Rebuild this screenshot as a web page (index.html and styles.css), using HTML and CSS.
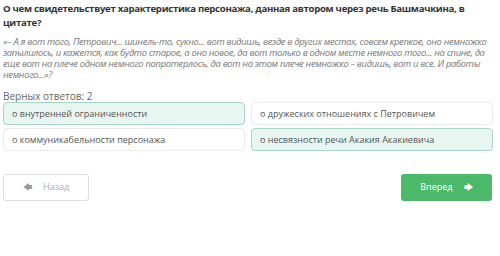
FILE: index.html
```html
<!DOCTYPE html>
<html>
<head>
<meta charset="UTF-8">
<title>Вопрос</title>
<link rel="stylesheet" href="styles.css">
</head>
<body>

<div class="question">
  <h1>О чем свидетельствует характеристика персонажа, данная автором через речь Башмачкина, в цитате?</h1>
  <p class="quote">«– А я вот того, Петрович... шинель-то, сукно... вот видишь, везде в других местах, совсем крепкое, оно немножко запылилось, и кажется, как будто старое, а оно новое, да вот только в одном месте немного того... на спине, да еще вот на плече одном немного попротерлось, да вот на этом плече немножко – видишь, вот и все. И работы немного...»?</p>
</div>

<div class="count">Верных ответов: 2</div>

<div class="answers">
  <div class="answer selected">о внутренней ограниченности</div>
  <div class="answer">о дружеских отношениях с Петровичем</div>
  <div class="answer">о коммуникабельности персонажа</div>
  <div class="answer selected">о несвязности речи Акакия Акакиевича</div>
</div>

<div class="nav">
  <button class="back"><span class="arrow">&#129092;</span> Назад</button>
  <button class="next">Вперед <span class="arrow">&#129094;</span></button>
</div>

</body>
</html>
```
FILE: styles.css
```css
body{
  margin:0; padding:0 2px 0 3px;
  font-family:"Open Sans",Arial,sans-serif; color:#555;
  background:#fff;
}
.question{padding-top:2px}
h1{
  margin:0; font-size:9.6px; line-height:14px; font-weight:bold; color:#333;
  letter-spacing:-0.28px; padding-right:30px;
}
.quote{
  margin:6px 0 0; font-size:9.4px; line-height:11px; font-style:italic; color:#777;
  letter-spacing:-0.3px;
}
.count{margin-top:10px; font-size:10px; line-height:12px; color:#666}
.answers{
  display:grid; grid-template-columns:1fr 1fr; gap:3px 6px;
  margin-top:0; padding-right:5px;
}
.answer{
  padding:0 8px; height:21px; line-height:21px;
  font-size:9px; color:#555;
  border:1px solid #eaeaea; border-radius:4px; background:#fff;
}
.answer.selected{background:#e8f6f1; border-color:#a9d5c5}
.nav{display:flex; justify-content:space-between; margin-top:23px; padding-right:6px}
button{
  height:27px; border-radius:3px; font-family:inherit; font-size:9px;
}
.back{
  width:86px; background:#fff; border:1px solid #ddd; color:#aaa;
}
.back .arrow{color:#999; margin-right:9px}
.next{
  width:91px; background:#4cb86a; border:none; color:#fff;
}
.next .arrow{margin-left:9px}
```
